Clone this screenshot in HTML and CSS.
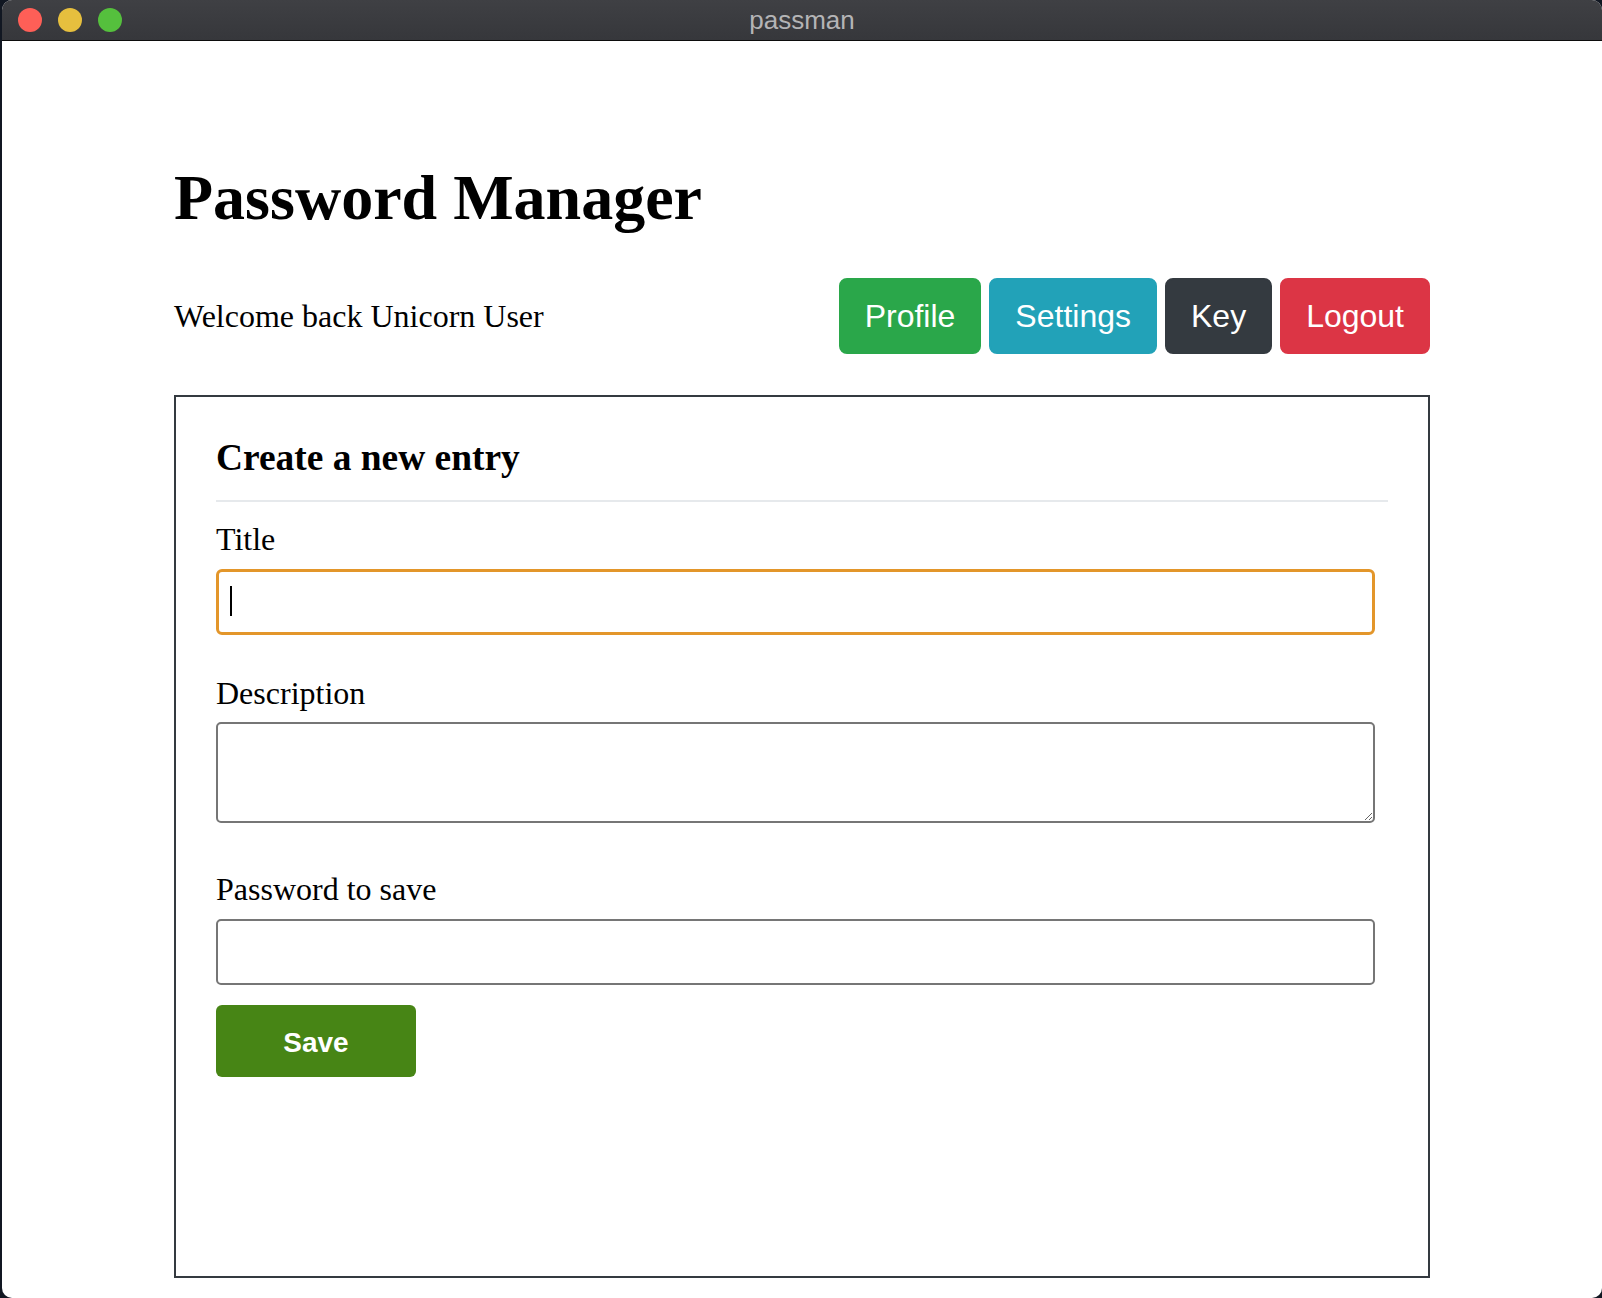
FILE: index.html
```html
<!DOCTYPE html>
<html lang="en">
<head>
<meta charset="utf-8">
<title>passman</title>
<link rel="stylesheet" href="styles.css">
</head>
<body>
<div class="window">
  <div class="titlebar">
    <div class="lights">
      <span class="light red"></span>
      <span class="light yellow"></span>
      <span class="light green"></span>
    </div>
    <div class="wintitle">passman</div>
  </div>
  <div class="page">
    <h1 class="brand">Password Manager</h1>
    <div class="userbar">
      <div class="welcome">Welcome back Unicorn User</div>
      <div class="actions">
        <button class="btn btn-success">Profile</button>
        <button class="btn btn-info">Settings</button>
        <button class="btn btn-dark">Key</button>
        <button class="btn btn-danger">Logout</button>
      </div>
    </div>
    <form class="entry-box">
      <h3 class="entry-title">Create a new entry</h3>
      <hr class="divider">
      <label class="field-label first">Title</label>
      <div class="focus-wrap">
        <input class="field field-focused" type="text">
        <span class="caret"></span>
      </div>
      <label class="field-label">Description</label>
      <textarea class="field field-area"></textarea>
      <label class="field-label after-area">Password to save</label>
      <input class="field" type="password">
      <button type="button" class="save-btn">Save</button>
    </form>
  </div>
</div>
</body>
</html>
```

FILE: styles.css
```css
html, body {
  margin: 0;
  padding: 0;
}

body {
  background: #111722;
  font-family: "Liberation Serif", "Times New Roman", serif;
  font-size: 32px;
  color: #000;
}

.window {
  margin-left: 2px;
  height: 1298px;
  background: #fff;
  border-radius: 10px;
  overflow: hidden;
}

.titlebar {
  position: relative;
  height: 40px;
  background: linear-gradient(#3f4044, #36373b);
  border-bottom: 1px solid #0c0c0c;
  display: flex;
  align-items: center;
  justify-content: center;
}

.lights {
  position: absolute;
  left: 16px;
  top: 8px;
  display: flex;
  gap: 16px;
}

.light {
  width: 24px;
  height: 24px;
  border-radius: 50%;
  display: block;
}

.red { background: #fe5f57; }
.yellow { background: #e6bf3e; }
.green { background: #55c03d; }

.wintitle {
  font-family: "Liberation Sans", Arial, sans-serif;
  font-size: 26px;
  color: #b4b4b6;
  margin-top: 1px;
}

.page {
  width: 1256px;
  margin: 0 auto;
  padding-top: 120px;
}

.brand {
  margin: 0;
  font-size: 64px;
  line-height: 74px;
  font-weight: bold;
}

.userbar {
  margin-top: 43px;
  display: flex;
  justify-content: space-between;
  align-items: baseline;
}

.welcome {
  line-height: 36px;
}

.actions {
  display: flex;
  gap: 8px;
  align-items: baseline;
}

.btn {
  font-family: "Liberation Sans", Arial, sans-serif;
  font-size: 32px;
  line-height: 48px;
  padding: 12px 24px;
  border: 2px solid transparent;
  border-radius: 8px;
  color: #fff;
  cursor: pointer;
}

.btn-success { background: #2aa74a; border-color: #2aa74a; }
.btn-info { background: #22a2b8; border-color: #22a2b8; }
.btn-dark { background: #343a40; border-color: #343a40; }
.btn-danger { background: #dc3545; border-color: #dc3545; }

.entry-box {
  margin-top: 41px;
  border: 2px solid #343a40;
  padding: 40px;
  height: 883px;
  box-sizing: border-box;
}

.entry-title {
  margin: 0;
  font-size: 37.44px;
  line-height: 42px;
  font-weight: bold;
}

.divider {
  margin: 21px 0 0;
  border: 0;
  border-top: 2px solid #e6e9ec;
  height: 0;
}

.field-label {
  display: block;
  line-height: 36px;
  margin-top: 39px;
  padding-top: 1px;
  margin-bottom: -1px;
}

.field-label.first {
  margin-top: 18px;
}

.field-label.after-area {
  margin-top: 47px;
}

.field {
  display: block;
  box-sizing: border-box;
  width: calc(100% - 13px);
  height: 66px;
  margin-top: 13px;
  border: 2px solid #767676;
  border-radius: 5px;
  background: #fff;
  font-family: "Liberation Sans", Arial, sans-serif;
  font-size: 26px;
  padding: 0 12px;
  outline: none;
}

.focus-wrap {
  position: relative;
  margin-top: 13px;
}

.focus-wrap .field {
  margin-top: 0;
}

.field-focused {
  border: 3px solid #e3962a;
  border-radius: 6px;
}

.caret {
  position: absolute;
  left: 14px;
  top: 17px;
  width: 2px;
  height: 30px;
  background: #000;
}

.field-area {
  height: 101px;
  margin-top: 12px;
  resize: both;
  padding: 6px 12px;
}

.save-btn {
  display: block;
  margin-top: 20px;
  width: 200px;
  height: 72px;
  padding: 3px 0 0;
  border: 0;
  border-radius: 6px;
  background: #478515;
  color: #fff;
  font-family: "Liberation Sans", Arial, sans-serif;
  font-weight: bold;
  font-size: 28px;
  cursor: pointer;
}
```
